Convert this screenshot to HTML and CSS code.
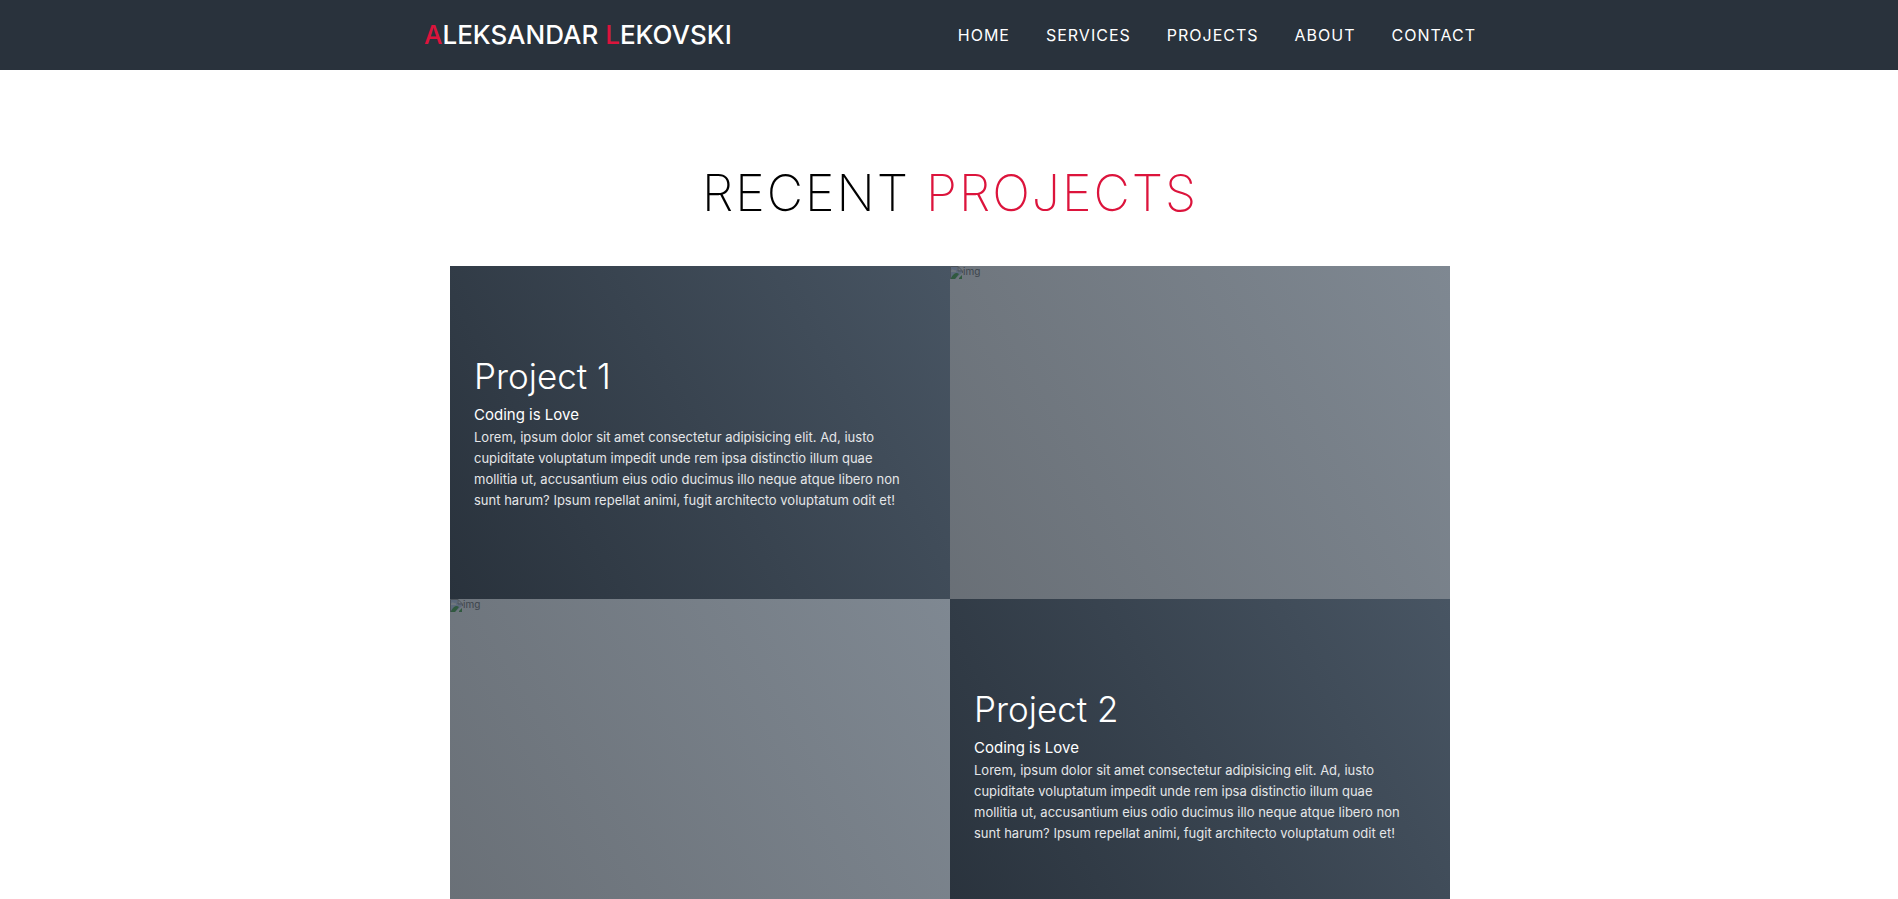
FILE: index.html
```html
<!DOCTYPE html>
<html lang="en">
<head>
<meta charset="utf-8">
<meta name="viewport" content="width=device-width, initial-scale=1">
<title>Aleksandar Lekovski</title>
<link rel="stylesheet" href="styles.css">
</head>
<body>
<header class="header">
  <div class="nav-bar">
    <a class="brand" href="#home"><span>A</span>LEKSANDAR <span>L</span>EKOVSKI</a>
    <nav>
      <ul class="nav-list">
        <li><a href="#home">HOME</a></li>
        <li><a href="#services">SERVICES</a></li>
        <li><a href="#projects">PROJECTS</a></li>
        <li><a href="#about">ABOUT</a></li>
        <li><a href="#contact">CONTACT</a></li>
      </ul>
    </nav>
  </div>
</header>
<main class="projects" id="projects">
  <h1 class="section-title">RECENT <span>PROJECTS</span></h1>
  <div class="all-projects">
    <article class="project-item">
      <div class="project-info">
        <h2>Project 1</h2>
        <h3>Coding is Love</h3>
        <p>Lorem, ipsum dolor sit amet consectetur adipisicing elit. Ad, iusto<br>cupiditate voluptatum impedit unde rem ipsa distinctio illum quae<br>mollitia ut, accusantium eius odio ducimus illo neque atque libero non<br>sunt harum? Ipsum repellat animi, fugit architecto voluptatum odit et!</p>
      </div>
      <div class="project-img">
        <svg class="broken" viewBox="0 0 13 13" aria-hidden="true"><path fill="#c1d3f5" d="M0 0h7v4h5v3L5 13H0z"/><path fill="#fff" d="M1 5q1-3 3-1 3 0 2 2H1z"/><path fill="#2e9e2e" d="M1 12q4-7 8-4l-4 5H1zM9 12l3-3v4H9z"/><path fill="none" stroke="#888" d="M.5 13V.5H8L12.500 5v2M8 .5V5h4"/></svg><span>img</span>
      </div>
    </article>
    <article class="project-item reversed">
      <div class="project-info">
        <h2>Project 2</h2>
        <h3>Coding is Love</h3>
        <p>Lorem, ipsum dolor sit amet consectetur adipisicing elit. Ad, iusto<br>cupiditate voluptatum impedit unde rem ipsa distinctio illum quae<br>mollitia ut, accusantium eius odio ducimus illo neque atque libero non<br>sunt harum? Ipsum repellat animi, fugit architecto voluptatum odit et!</p>
      </div>
      <div class="project-img">
        <svg class="broken" viewBox="0 0 13 13" aria-hidden="true"><path fill="#c1d3f5" d="M0 0h7v4h5v3L5 13H0z"/><path fill="#fff" d="M1 5q1-3 3-1 3 0 2 2H1z"/><path fill="#2e9e2e" d="M1 12q4-7 8-4l-4 5H1zM9 12l3-3v4H9z"/><path fill="none" stroke="#888" d="M.5 13V.5H8L12.500 5v2M8 .5V5h4"/></svg><span>img</span>
      </div>
    </article>
  </div>
</main>
</body>
</html>
```
FILE: styles.css
```css
* { margin: 0; padding: 0; box-sizing: border-box; }
body { font-family: Inter, "Open Sans", sans-serif; background: #fff; color: #000; overflow-x: hidden; }
a { text-decoration: none; color: inherit; }
.header { background: #29323c; color: #fff; padding-left: 2px; }
.nav-bar {
  max-width: 1052px; min-height: 70px; margin: 0 auto;
  display: flex; align-items: center; justify-content: space-between;
}
.brand { font-size: 26px; font-weight: 500; line-height: 32px; }
.brand span, .section-title span { color: crimson; }
.nav-list { list-style: none; display: flex; gap: 36px; font-size: 16px; line-height: 20px; letter-spacing: 1px; }
.projects { padding: 88px 0 0 2px; }
.section-title {
  font-size: 50px; font-weight: 200; line-height: 70px; letter-spacing: 2px;
  text-align: center; margin-bottom: 38px;
}
.all-projects { max-width: 1000px; margin: 0 auto; }
.project-item { display: flex; min-height: 333px; }
.project-item.reversed { flex-direction: row-reverse; }
.project-info, .project-img { flex: 1 1 50%; background: linear-gradient(60deg, #29323c 0%, #485563 100%); }
.project-info {
  color: #fff; padding: 0 24px;
  display: flex; flex-direction: column; justify-content: center;
}
.project-info h2 { font-size: 35px; font-weight: 300; line-height: 42px; margin-bottom: 8px; }
.project-info h3 { font-size: 15px; font-weight: 400; line-height: 20px; margin-bottom: 2px; }
.project-info p { font-size: 13px; font-weight: 400; line-height: 21px; color: #e4e6e8; }
.project-img {
  position: relative; display: flex; align-items: flex-start;
  background: #fff; font-size: 10px; line-height: 11px; color: #555;
}
.project-img::after {
  content: ""; position: absolute; inset: 0;
  background: linear-gradient(60deg, #29323c 0%, #485563 100%); opacity: .7;
}
.broken { width: 13px; height: 13px; }
```
